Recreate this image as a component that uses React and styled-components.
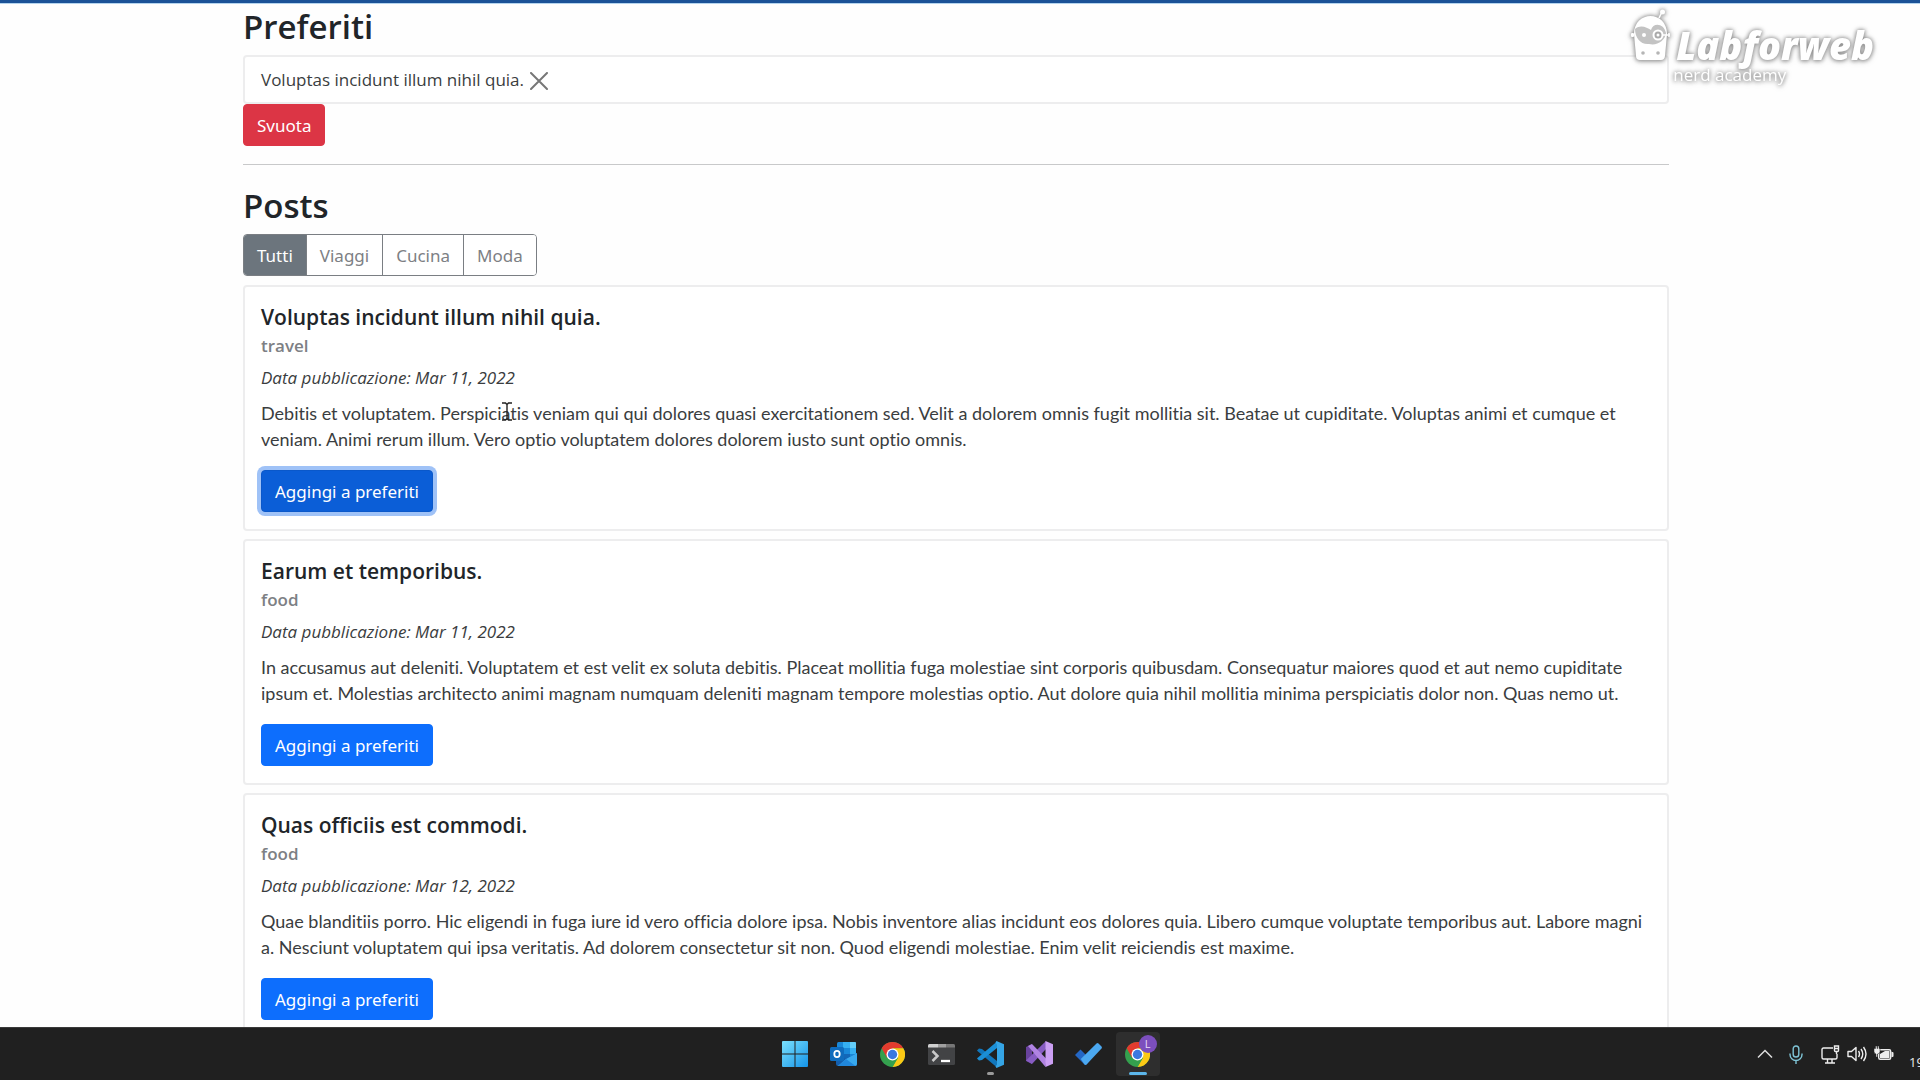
import React from 'react';
import styled, { createGlobalStyle, css } from 'styled-components';

const GlobalStyle = createGlobalStyle`
  *, *::before, *::after { box-sizing: border-box; }
  body {
    margin: 0;
    background: #fefefe;
    color: #212529;
    font-family: 'Open Sans', 'Noto Sans', sans-serif;
    font-size: 17px;
    line-height: 26px;
    overflow: hidden;
  }
  h1, h2, p { margin: 0; }
  button { font: inherit; cursor: pointer; }
`;

const Desktop = styled.div`
  position: relative;
  display: flex;
  flex-direction: column;
  height: 100vh;
  overflow: hidden;
`;

const Viewport = styled.main`
  flex: 1;
  min-height: 0;
  overflow: hidden;
  border-top: 3px solid #1b5297;
  padding: 1px 8px 0 0;
  box-shadow: inset 0 1px 0 #b4d4ee;
`;

const Container = styled.div`
  max-width: 1452px;
  margin: 0 auto;
  padding: 0 13px;
`;

const Heading = styled.h1`
  font-size: 33px;
  font-weight: 600;
  line-height: 46px;
  margin-bottom: 5px;
`;

const Panel = styled.div`
  background: #fff;
  border: 2px solid #ededee;
  border-radius: 4px;
`;

const FavouriteRow = styled(Panel)`
  display: flex;
  align-items: center;
  gap: 6px;
  height: 49px;
  padding: 0 16px;
  color: #3a3d40;
`;

const CloseButton = styled.button`
  display: flex;
  padding: 2px 0 0;
  border: 0;
  background: none;
  color: #777;
`;

const variants = {
  primary: css`background: #0d6efd; border-color: #0d6efd;`,
  focused: css`background: #0b5ed7; border-color: #0a58ca; box-shadow: 0 0 0 4px #9fc2f7;`,
  danger: css`background: #dc3545; border-color: #dc3545;`,
};

const Button = styled.button`
  display: block;
  height: 42px;
  padding: 2px 13px 0;
  border: 1px solid;
  border-radius: 4px;
  color: #fff;
  font-family: 'Noto Sans', sans-serif;
  outline: none;
  ${(p) => variants[p.$variant]}
`;

const Divider = styled.hr`
  height: 1px;
  margin: 18px 0;
  border: 0;
  background: #c8c9ca;
`;

const Filters = styled.div`
  display: inline-flex;
  height: 42px;
  margin-bottom: 9px;
  border: 1px solid #7a7e83;
  border-radius: 4px;
  overflow: hidden;
  vertical-align: top;
`;

const FilterButton = styled.button`
  padding: 2px 13px 0;
  border: 0;
  font-family: 'Noto Sans', sans-serif;
  background: ${(p) => (p.$active ? '#6c757d' : '#fff')};
  color: ${(p) => (p.$active ? '#fff' : '#7d8084')};
  & + & { border-left: 1px solid #7a7e83; }
`;

const PostList = styled.div`
  display: grid;
  gap: 8px;
`;

const PostCard = styled(Panel)`
  padding: 17px 16px;
`;

const PostTitle = styled.h2`
  font-size: 21px;
  font-weight: 600;
  line-height: 26px;
  margin-bottom: 5px;
`;

const Category = styled.p`
  color: #7d8084;
  font-weight: 600;
  line-height: 21px;
  margin-bottom: 9px;
`;

const PostDate = styled.p`
  color: #3a3d40;
  font-style: italic;
  margin-bottom: 9px;
`;

const PostText = styled.p`
  color: #3a3d40;
  font-family: Lato, 'Open Sans', sans-serif;
  font-size: 18px;
  font-variant-ligatures: none;
  margin-bottom: 18px;
`;

const Brand = styled.div`
  position: absolute;
  top: 8px;
  right: 46px;
  display: flex;
  gap: 2px;
  color: #fff;
  filter: drop-shadow(0 0 2px #888) drop-shadow(0 1px 2px #bbb);
  pointer-events: none;
`;

const BrandText = styled.div`
  display: flex;
  flex-direction: column;
  padding-top: 18px;
`;

const BrandName = styled.span`
  padding-left: 3px;
  font-family: 'Open Sans', sans-serif;
  font-size: 38px;
  font-weight: 800;
  font-style: italic;
  line-height: 38px;
`;

const BrandTag = styled.span`
  font-size: 17px;
  line-height: 22px;
`;

const Pointer = styled.svg`
  position: absolute;
  left: 501px;
  top: 402px;
  pointer-events: none;
`;

const Taskbar = styled.footer`
  display: grid;
  grid-template-columns: 1fr auto 1fr;
  align-items: center;
  height: 53px;
  padding-left: 12px;
  background: #202020;
  border-top: 1px solid #3a3a3a;
  color: #e8e8e8;
`;

const Apps = styled.nav`
  grid-column: 2;
  display: flex;
  gap: 5px;
`;

const AppButton = styled.button`
  position: relative;
  display: grid;
  place-items: center;
  width: 44px;
  height: 44px;
  padding: 0;
  border: 0;
  border-radius: 4px;
  background: ${(p) => (p.$current ? '#2e2e2e' : 'transparent')};
  ${(p) => p.$mark && css`
    &::after {
      content: '';
      position: absolute;
      bottom: 1px;
      width: ${p.$current ? 18 : 7}px;
      height: 3px;
      border-radius: 2px;
      background: ${p.$current ? '#5cb6ea' : '#9a9a9a'};
    }
  `}
`;

const Tray = styled.div`
  display: flex;
  justify-content: flex-end;
  align-items: center;
  gap: 7px;
`;

const TrayGroup = styled.div`
  display: flex;
  margin: 0 11px 0 9px;
`;

const Clock = styled.time`
  align-self: end;
  margin-left: 8px;
  width: 11px;
  overflow: hidden;
  padding-top: 16px;
  font-size: 13px;
  line-height: 16px;
  white-space: nowrap;
`;

const WindowsIcon = () => (
  <svg width="26" height="26" viewBox="0 0 26 26" aria-hidden="true">
    <defs>
      <linearGradient id="win" x1="0" y1="0" x2="1" y2="1">
        <stop offset="0" stopColor="#7be0fb" /><stop offset="1" stopColor="#1494ea" />
      </linearGradient>
    </defs>
    <path fill="url(#win)" d="M1 0h11.500v12.500H0V1q0-1 1-1zM13.500 0H25q1 0 1 1v11.500H13.500zM0 13.500h12.500V26H1q-1 0-1-1zM13.500 13.500H26V25q0 1-1 1H13.500z" />
  </svg>
);

const OutlookIcon = () => (
  <svg width="27" height="24" viewBox="0 0 27 24" aria-hidden="true">
    <rect x="7" y="0" width="19" height="18" rx="1.500" fill="#1988d9" />
    <path fill="#35b0f2" d="M13 0h7v6h-7zM20 6h6v6h-6z" />
    <path fill="#63cdf8" d="M20 0h5q1 0 1 1v5h-6z" />
    <path fill="#1267b8" d="M7 6h6v6H7zM13 12h7v6h-7z" />
    <path fill="#145fae" d="M6 11l10 6 11-6v11q0 2-2 2H8q-2 0-2-2z" />
    <path fill="#38a9ee" d="M27 11v11q0 2-2 2H8l8-7z" />
    <path fill="#2087dc" d="M8 24l8-7 9.500 7z" />
    <rect x="0" y="5" width="14" height="14" rx="1.500" fill="#0f6cbd" />
    <ellipse cx="7" cy="12" rx="2.700" ry="3.200" fill="none" stroke="#fff" strokeWidth="1.800" />
  </svg>
);

const ChromeIcon = () => (
  <svg width="25" height="25" viewBox="0 0 48 48" aria-hidden="true">
    <circle cx="24" cy="24" r="24" fill="#34a04e" />
    <path fill="#e33b2e" d="M24 24L3.200 12A24 24 0 0 1 44.800 12H24z" />
    <path fill="#fbc915" d="M24 12h20.800A24 24 0 0 1 24 48l10.400-18z" />
    <path fill="#e33b2e" d="M3.200 12l10.400 18L24 12z" />
    <path fill="#34a04e" d="M24 48l10.400-18H13.600L18 38z" />
    <circle cx="24" cy="24" r="11.500" fill="#fff" />
    <circle cx="24" cy="24" r="9" fill="#3b78e0" />
  </svg>
);

const TerminalIcon = () => (
  <svg width="27" height="21" viewBox="0 0 27 21" aria-hidden="true">
    <rect width="27" height="21" rx="1.500" fill="#424345" />
    <path fill="#d0d0d0" d="M1.500 0H10v3.500H0v-2Q0 0 1.500 0z" />
    <path fill="#a0a0a0" d="M10 0h8v3.500h-8z" />
    <path fill="#777" d="M18 0h7.500Q27 0 27 1.500v2h-9z" />
    <path fill="none" stroke="#c9c9c9" strokeWidth="2.500" d="M4.500 7l5 5-5 5" />
    <path stroke="#fff" strokeWidth="2.300" d="M13 17h9" />
  </svg>
);

const CodeIcon = () => (
  <svg width="27" height="27" viewBox="0 0 27 27" aria-hidden="true">
    <path fill="#1177bd" d="M0 9.500l2-2 3 .500L20 20v6.500L1 10.500z" />
    <path fill="#1b8fd6" d="M0 17.500l2 2 3-.500L20 7V.500L1 16.500z" />
    <path fill="#35a5e6" d="M19.500 0L27 3.200v20.600L19.500 27l-1-1.500 1.500-2V3.500l-1.500-2z" />
  </svg>
);

const StudioIcon = () => (
  <svg width="27" height="26" viewBox="0 0 27 26" aria-hidden="true">
    <path fill="#68429c" d="M0 6l6-3v20l-6-3z" />
    <path fill="#875cc2" d="M6 23L20 8V0L0 19.500z" />
    <path fill="#b083e2" d="M6 3l-4 2 17.500 21 1-8z" />
    <path fill="#cb9ff3" d="M19.500 0L27 3.200v19.600L19.500 26z" />
  </svg>
);

const TodoIcon = () => (
  <svg width="27" height="22" viewBox="0 0 27 22" aria-hidden="true">
    <path fill="#2467c5" d="M5.500 6.500L0 12l9.500 9.500q1 .500 2 0l4-5z" />
    <path fill="#4ba8f0" d="M21.500.500q1-.800 2 0l3 3q.800 1 0 2L11.500 21.500q-1 .800-2 0L5.800 16z" />
  </svg>
);

const Badge = styled.span`
  position: absolute;
  top: 3px;
  right: 3px;
  width: 18px;
  height: 18px;
  border-radius: 50%;
  background: #7c4fbd;
  color: #eadcf8;
  font-size: 11px;
  line-height: 18px;
  text-align: center;
`;

const Robot = () => (
  <svg width="40" height="54" viewBox="0 0 40 54" aria-hidden="true">
    <path d="M28 10l3-6" stroke="#fff" strokeWidth="1.500" />
    <circle cx="31.500" cy="4" r="2.500" fill="#fff" />
    <path fill="#fff" d="M3 26C3 2 36 2 36 26l-2 22q-.500 4-4 4H9q-4 0-4-4z" />
    <path fill="#c3c3c3" d="M4 21c6-5 12-1 16 1 2-8 13-7 15 3-1 8-9 13-17 11-8 1-14-6-14-15z" />
    <rect x="0" y="25" width="3" height="4" rx="1" fill="#fff" />
    <circle cx="13" cy="27" r="2" fill="#fff" />
    <circle cx="27" cy="27" r="4.500" fill="#aaa" stroke="#fff" strokeWidth="2" />
    <circle cx="27" cy="27" r="1.500" fill="#fff" />
    <path d="M32 27h7M38 25v4" stroke="#fff" strokeWidth="1.500" />
    <circle cx="12" cy="45" r="1.800" fill="#b5b5b5" />
    <circle cx="27" cy="45" r="1.800" fill="#b5b5b5" />
  </svg>
);

const filters = ['Tutti', 'Viaggi', 'Cucina', 'Moda'];

const posts = [
  {
    title: 'Voluptas incidunt illum nihil quia.', category: 'travel', date: 'Mar 11, 2022', focused: true,
    text: 'Debitis et voluptatem. Perspiciatis veniam qui qui dolores quasi exercitationem sed. Velit a dolorem omnis fugit mollitia sit. Beatae ut cupiditate. Voluptas animi et cumque et veniam. Animi rerum illum. Vero optio voluptatem dolores dolorem iusto sunt optio omnis.',
  },
  {
    title: 'Earum et temporibus.', category: 'food', date: 'Mar 11, 2022',
    text: 'In accusamus aut deleniti. Voluptatem et est velit ex soluta debitis. Placeat mollitia fuga molestiae sint corporis quibusdam. Consequatur maiores quod et aut nemo cupiditate ipsum et. Molestias architecto animi magnam numquam deleniti magnam tempore molestias optio. Aut dolore quia nihil mollitia minima perspiciatis dolor non. Quas nemo ut.',
  },
  {
    title: 'Quas officiis est commodi.', category: 'food', date: 'Mar 12, 2022',
    text: 'Quae blanditiis porro. Hic eligendi in fuga iure id vero officia dolore ipsa. Nobis inventore alias incidunt eos dolores quia. Libero cumque voluptate temporibus aut. Labore magni a. Nesciunt voluptatem qui ipsa veritatis. Ad dolorem consectetur sit non. Quod eligendi molestiae. Enim velit reiciendis est maxime.',
  },
];

const apps = [
  { name: 'Start', Icon: WindowsIcon },
  { name: 'Outlook', Icon: OutlookIcon },
  { name: 'Chrome', Icon: ChromeIcon },
  { name: 'Terminal', Icon: TerminalIcon },
  { name: 'Visual Studio Code', Icon: CodeIcon, mark: true },
  { name: 'Visual Studio', Icon: StudioIcon },
  { name: 'To Do', Icon: TodoIcon },
  { name: 'Chrome, profile L', Icon: ChromeIcon, mark: true, current: true, badge: 'L' },
];

export default function App() {
  return (
    <Desktop>
      <GlobalStyle />
      <Viewport>
        <Container>
          <Heading>Preferiti</Heading>
          <FavouriteRow>
            <span>Voluptas incidunt illum nihil quia.</span>
            <CloseButton aria-label="Rimuovi">
              <svg width="18" height="18" viewBox="0 0 18 18" fill="none" stroke="currentColor" strokeWidth="2" strokeLinecap="round">
                <path d="M1 1l16 16M17 1L1 17" />
              </svg>
            </CloseButton>
          </FavouriteRow>
          <Button $variant="danger">Svuota</Button>
          <Divider />
          <Heading>Posts</Heading>
          <Filters>
            {filters.map((name, i) => (
              <FilterButton key={name} $active={i === 0}>{name}</FilterButton>
            ))}
          </Filters>
          <PostList>
            {posts.map((post) => (
              <PostCard as="article" key={post.title}>
                <PostTitle>{post.title}</PostTitle>
                <Category>{post.category}</Category>
                <PostDate>Data pubblicazione: {post.date}</PostDate>
                <PostText>{post.text}</PostText>
                <Button $variant={post.focused ? 'focused' : 'primary'}>Aggingi a preferiti</Button>
              </PostCard>
            ))}
          </PostList>
        </Container>
      </Viewport>

      <Taskbar>
        <Apps>
          {apps.map(({ name, Icon, mark, current, badge }) => (
            <AppButton key={name} aria-label={name} $mark={mark} $current={current}>
              <Icon />
              {badge && <Badge>{badge}</Badge>}
            </AppButton>
          ))}
        </Apps>
        <Tray>
          <svg width="16" height="10" viewBox="0 0 16 10" fill="none" stroke="#ddd" strokeWidth="1.500" aria-hidden="true">
            <path d="M1 8.500l7-7 7 7" />
          </svg>
          <TrayGroup>
            <svg width="14" height="19" viewBox="0 0 14 19" fill="none" stroke="#7fc4d6" strokeWidth="1.400" aria-hidden="true">
              <rect x="4.200" y="1" width="5.600" height="11" rx="2.800" />
              <path d="M1 8.500v1a6 6 0 0 0 12 0v-1M7 15.500V19" />
            </svg>
          </TrayGroup>
          <svg width="19" height="19" viewBox="0 0 19 19" fill="none" stroke="#eee" strokeWidth="1.400" aria-hidden="true">
            <path d="M12 3H2.500Q1 3 1 4.500v8Q1 14 2.500 14h12q1.500 0 1.500-1.500V9M6.500 14v4M11 14v4M4 18h10" />
            <path d="M13.500 1h4v4.500q0 1-1 1h-2q-1 0-1-1zM13.500 3.500h4M15.500 6.500V9" />
          </svg>
          <svg width="20" height="18" viewBox="0 0 20 18" fill="none" stroke="#eee" strokeWidth="1.400" strokeLinejoin="round" aria-hidden="true">
            <path d="M1 6.500h3.500L9 2.500v13l-4.500-4H1zM11.500 6q2 3 0 6M14 4q3.500 5 0 10M16.500 2q5 7 0 14" />
          </svg>
          <svg width="20" height="16" viewBox="0 0 20 16" aria-hidden="true">
            <rect x="4.700" y="3.700" width="12" height="9.500" rx="1.500" fill="none" stroke="#eee" strokeWidth="1.400" />
            <path fill="#eee" d="M6 8l5-3h4.500v7H6zM17.500 6h1q1 0 1 1v3q0 1-1 1h-1z" />
            <path fill="#eee" stroke="#202020" strokeWidth=".500" d="M1.500 0v2.500H0v3q0 2 2 2.500v3h1.500V8q2.500-.500 2.500-2.500v-3H5V0H3.500v2.500H3V0z" />
          </svg>
          <Clock>19</Clock>
        </Tray>
      </Taskbar>

      <Brand>
        <Robot />
        <BrandText>
          <BrandName>Labforweb</BrandName>
          <BrandTag>nerd academy</BrandTag>
        </BrandText>
      </Brand>
      <Pointer width="12" height="19" viewBox="0 0 12 19" fill="none" stroke="#222" strokeWidth="1.400" aria-hidden="true">
        <path d="M1 1h3.500L6 2.500 7.500 1H11M6 2.500v14M1 18h3.500L6 16.500 7.500 18H11" />
      </Pointer>
    </Desktop>
  );
}
